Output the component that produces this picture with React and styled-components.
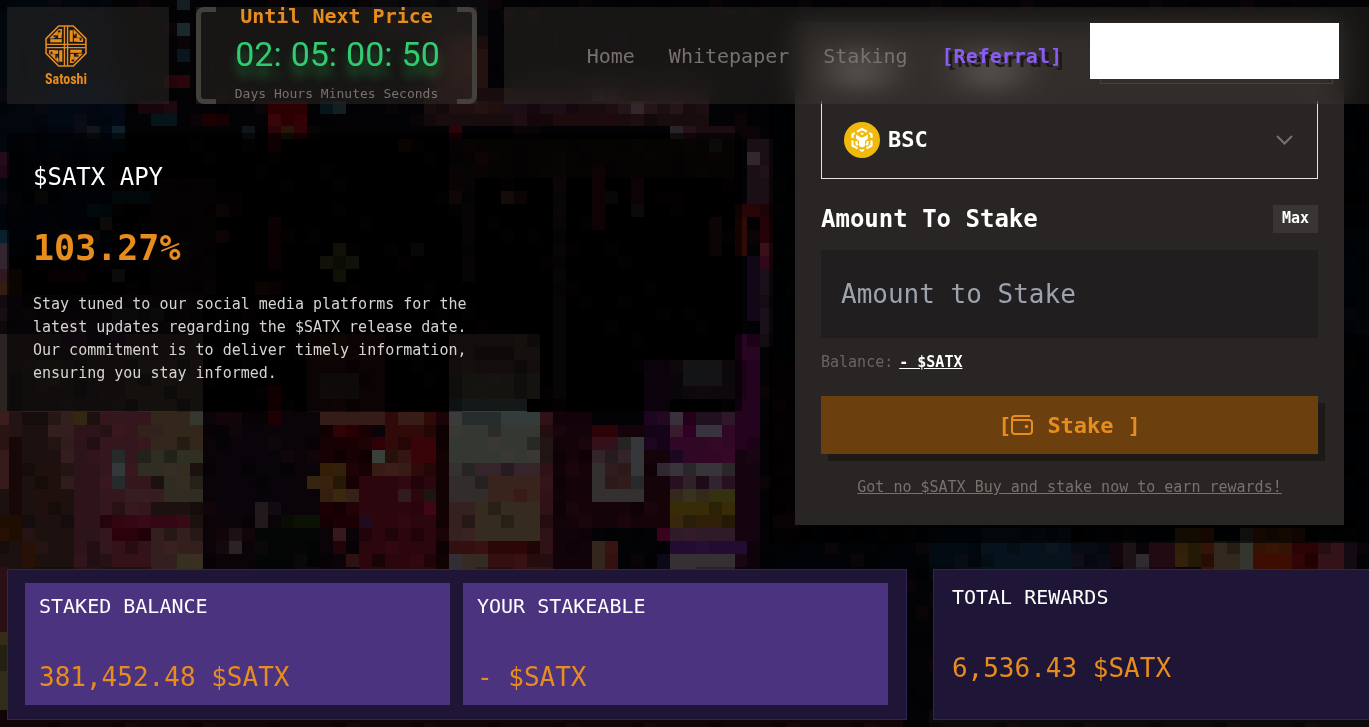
import React from 'react'
import styled, { createGlobalStyle, css } from 'styled-components'

const GlobalStyle = createGlobalStyle`
  * {
    box-sizing: border-box;
  }

  body {
    margin: 0;
    overflow: hidden;
    background: #030204;
    color: #fff;
    font-family: 'DejaVu Sans Mono', 'Liberation Mono', monospace;
  }

  h1, h2, p {
    margin: 0;
    font-weight: 400;
  }

  button, input, select {
    font-family: inherit;
    border: 0;
    border-radius: 0;
  }
`

/* ---------- Backdrop ---------- */

// [column, row, width, height, colour]
const PIXELS = [
  // sky on the left
  [0, 0, 9, 20, '#02060d'],
  [4, 6, 6, 6, '#020914'],
  [14, 0, 1, 1, '#1b282b'],
  [14, 2, 1, 1, '#1b282b'],
  [14, 4, 1, 1, '#07171c'],
  [13, 6, 2, 1, '#240309'],
  [12, 9, 2, 1, '#061519'],
  [9, 10, 1, 1, '#10202a'],
  [7, 10, 1, 1, '#0b1418'],
  [11, 8, 3, 1, '#18050b'],
  [16, 9, 1, 1, '#2a0003'],
  [17, 9, 1, 1, '#150004'],
  [21, 8, 3, 3, '#2c0003'],
  [21, 9, 1, 2, '#38060a'],
  [22, 10, 1, 1, '#331f0b'],
  [21, 11, 1, 1, '#260206'],
  [25, 8, 1, 1, '#04161b'],
  [26, 8, 1, 1, '#141f21'],
  [19, 10, 1, 1, '#111519'],
  [0, 12, 1, 1, '#240d1b'],
  [0, 13, 1, 1, '#22071a'],
  [0, 18, 1, 1, '#06202c'],
  [0, 19, 1, 2, '#332530'],
  [0, 21, 1, 2, '#301720'],
  [0, 22, 1, 1, '#331c10'],
  [0, 23, 1, 3, '#10020f'],
  [3, 15, 1, 1, '#1a1512'],
  [9, 15, 3, 1, '#02161a'],
  [7, 16, 2, 1, '#031820'],
  [8, 17, 1, 1, '#241a1a'],
  [5, 18, 3, 1, '#1a1010'],
  [16, 16, 2, 1, '#241009'],
  [16, 18, 2, 1, '#1c0b08'],
  [12, 14, 5, 9, '#0c0506'],
  [21, 17, 1, 4, '#1c0406'],
  [9, 21, 1, 1, '#20191c'],
  [1, 21, 1, 2, '#1d0e04'],
  [4, 21, 3, 1, '#14040a'],
  [20, 22, 2, 1, '#1c0a08'],
  [26, 19, 1, 3, '#2b2a10'],
  [25, 20, 3, 1, '#2b2817'],
  [32, 19, 1, 1, '#14100f'],
  // roofs
  [29, 0, 9, 3, '#0a090b'],
  [34, 3, 4, 4, '#241211'],
  [33, 7, 22, 3, '#190c0e'],
  [35, 8, 4, 1, '#200f0f'],
  [39, 8, 6, 1, '#1d0d14'],
  [41, 9, 7, 1, '#1c0a0c'],
  [46, 7, 2, 1, '#2c1c1f'],
  [48, 8, 5, 1, '#251418'],
  [49, 8, 1, 1, '#33262c'],
  [52, 10, 1, 1, '#29242a'],
  [53, 10, 4, 1, '#251117'],
  [35, 10, 1, 1, '#2d0208'],
  [35, 11, 22, 3, '#110a09'],
  [31, 11, 1, 1, '#240b0a'],
  [35, 13, 1, 3, '#20100d'],
  [37, 12, 1, 1, '#240b08'],
  [39, 15, 1, 1, '#331c19'],
  [40, 15, 1, 1, '#1c080a'],
  [43, 12, 1, 19, '#120f0d'],
  [36, 13, 1, 9, '#100c0b'],
  [46, 13, 1, 5, '#25060a'],
  [49, 14, 1, 2, '#25090a'],
  [49, 16, 1, 1, '#201a17'],
  [47, 15, 1, 1, '#111316'],
  [55, 11, 1, 1, '#1b1c1d'],
  [55, 17, 1, 3, '#1c0b0a'],
  [58, 11, 2, 5, '#1b0f16'],
  [58, 12, 1, 1, '#33262d'],
  [57, 16, 3, 1, '#250508'],
  [57, 17, 1, 3, '#300a07'],
  [59, 17, 1, 2, '#250209'],
  [59, 19, 1, 1, '#3a1018'],
  [59, 20, 1, 1, '#2c0618'],
  [60, 20, 1, 1, '#230c17'],
  [58, 20, 1, 5, '#120717'],
  [59, 21, 1, 6, '#19101a'],
  // left building
  [0, 26, 16, 6, '#2b2222'],
  [0, 23, 16, 3, '#110b0f'],
  [9, 24, 4, 1, '#1c191c'],
  [5, 25, 5, 2, '#201422'],
  [10, 28, 6, 4, '#302a22'],
  [3, 28, 2, 2, '#2b2921'],
  [0, 32, 16, 13, '#1d1110'],
  [0, 32, 1, 6, '#371b1a'],
  [1, 34, 1, 6, '#180707'],
  [4, 32, 2, 2, '#331f1e'],
  [5, 34, 1, 4, '#301c1d'],
  [6, 32, 1, 1, '#332711'],
  [6, 33, 3, 11, '#2d141a'],
  [8, 32, 4, 12, '#33171c'],
  [12, 32, 4, 3, '#33261b'],
  [11, 33, 2, 1, '#33221b'],
  [15, 32, 1, 1, '#35382f'],
  [11, 35, 3, 2, '#2f2e22'],
  [14, 35, 2, 1, '#2f3022'],
  [13, 37, 3, 2, '#302c22'],
  [14, 36, 1, 1, '#352b1e'],
  [9, 35, 1, 3, '#34383a'],
  [10, 38, 3, 1, '#361d20'],
  [8, 40, 2, 1, '#32060f'],
  [10, 40, 5, 1, '#330814'],
  [9, 41, 3, 1, '#2b020b'],
  [12, 41, 4, 4, '#33201e'],
  [9, 42, 3, 2, '#341219'],
  [14, 43, 2, 2, '#35301f'],
  [0, 40, 2, 2, '#200d02'],
  [3, 36, 2, 4, '#1f100e'],
  [2, 42, 1, 2, '#271005'],
  // alley
  [16, 32, 18, 13, '#0a0307'],
  [17, 33, 6, 7, '#080409'],
  [21, 30, 1, 3, '#290004'],
  [24, 26, 6, 6, '#20090a'],
  [25, 26, 2, 2, '#211305'],
  [25, 29, 3, 2, '#241b1a'],
  [25, 32, 5, 1, '#351c18'],
  [30, 32, 4, 5, '#300909'],
  [31, 32, 2, 1, '#381d16'],
  [25, 33, 4, 6, '#170102'],
  [26, 33, 2, 1, '#280003'],
  [29, 34, 1, 1, '#2f0006'],
  [29, 35, 1, 1, '#384039'],
  [29, 36, 3, 1, '#371c15'],
  [30, 35, 2, 1, '#351511'],
  [32, 34, 2, 2, '#380407'],
  [25, 36, 2, 2, '#33200a'],
  [24, 37, 1, 1, '#35240f'],
  [25, 36, 1, 1, '#331f05'],
  [25, 38, 1, 1, '#331f10'],
  [26, 38, 1, 1, '#3b270b'],
  [27, 38, 1, 1, '#35201a'],
  [20, 39, 1, 2, '#22191c'],
  [21, 39, 1, 1, '#150f16'],
  [22, 40, 3, 1, '#0b1104'],
  [20, 41, 5, 4, '#030605'],
  [18, 41, 1, 1, '#1c1015'],
  [18, 42, 1, 1, '#2b2226'],
  [17, 42, 1, 1, '#180c12'],
  [28, 37, 6, 8, '#2c060d'],
  [31, 38, 1, 1, '#311c1d'],
  [33, 38, 1, 1, '#1d150e'],
  [32, 39, 2, 1, '#380510'],
  [28, 40, 1, 1, '#1c081c'],
  [26, 41, 1, 1, '#36191c'],
  [26, 42, 1, 1, '#20040a'],
  [27, 43, 1, 1, '#2c1213'],
  [29, 43, 1, 1, '#190405'],
  [25, 39, 3, 2, '#1b0103'],
  [34, 32, 1, 13, '#130204'],
  // lit tower
  [35, 26, 7, 3, '#302522'],
  [35, 29, 7, 2, '#33302a'],
  [35, 31, 6, 1, '#343d3c'],
  [35, 32, 7, 1, '#343b3b'],
  [35, 33, 7, 3, '#353831'],
  [38, 33, 1, 1, '#2c2b28'],
  [37, 36, 5, 1, '#35252a'],
  [35, 36, 2, 1, '#343230'],
  [35, 37, 3, 2, '#332c2d'],
  [38, 37, 4, 3, '#38241c'],
  [40, 38, 1, 1, '#3a1a17'],
  [35, 39, 2, 3, '#352120'],
  [37, 39, 5, 3, '#352b1f'],
  [35, 42, 7, 3, '#33100f'],
  [38, 42, 4, 1, '#2b0708'],
  [35, 43, 1, 2, '#332d36'],
  [36, 43, 2, 2, '#352a24'],
  [42, 32, 1, 13, '#2f1216'],
  [42, 34, 1, 2, '#201414'],
  [43, 32, 3, 13, '#12030a'],
  [44, 33, 8, 8, '#15030a'],
  // signs
  [46, 33, 2, 1, '#2c0307'],
  [46, 34, 4, 5, '#33302f'],
  [46, 34, 2, 1, '#34101a'],
  [46, 35, 3, 1, '#33242a'],
  [47, 36, 2, 2, '#2c1a1a'],
  [49, 34, 1, 4, '#35373a'],
  [46, 42, 2, 3, '#35261d'],
  [47, 42, 1, 3, '#33110f'],
  [50, 28, 2, 7, '#1c061f'],
  [52, 32, 5, 4, '#300724'],
  [52, 32, 1, 1, '#34303a'],
  [52, 33, 1, 1, '#331a2c'],
  [53, 32, 1, 2, '#300024'],
  [54, 32, 3, 1, '#2d1729'],
  [54, 33, 2, 1, '#39333f'],
  [52, 35, 1, 1, '#1c0722'],
  [52, 28, 5, 3, '#211420'],
  [53, 28, 3, 2, '#2e3236'],
  [57, 26, 2, 9, '#24031f'],
  [57, 35, 2, 9, '#14040f'],
  [51, 36, 1, 1, '#302732'],
  [52, 36, 5, 1, '#393439'],
  [52, 37, 5, 1, '#271020'],
  [53, 37, 1, 1, '#302027'],
  [55, 37, 1, 1, '#302430'],
  [52, 38, 5, 1, '#33281a'],
  [53, 38, 1, 1, '#37331f'],
  [55, 38, 2, 1, '#33310f'],
  [52, 39, 5, 1, '#382c08'],
  [52, 40, 2, 1, '#38270d'],
  [54, 40, 3, 1, '#302009'],
  [52, 41, 5, 1, '#2f1a29'],
  [51, 41, 1, 1, '#33001a'],
  [52, 42, 6, 1, '#220c31'],
  [52, 43, 5, 2, '#343033'],
  [51, 43, 1, 2, '#0b0915'],
  // street under the card
  [60, 8, 46, 37, '#020306'],
  [60, 28, 2, 14, '#080306'],
  [60, 40, 2, 1, '#140c10'],
  [72, 41, 6, 4, '#020a12'],
  [76, 41, 7, 4, '#06131c'],
  [83, 42, 3, 3, '#080b15'],
  [86, 42, 1, 2, '#12060c'],
  [87, 42, 1, 3, '#1c1317'],
  [88, 43, 1, 2, '#302b30'],
  [89, 42, 2, 3, '#220a13'],
  [91, 41, 2, 3, '#302008'],
  [93, 41, 1, 4, '#351307'],
  [94, 42, 2, 3, '#32281d'],
  [96, 41, 1, 4, '#34352f'],
  [97, 41, 4, 2, '#331404'],
  [97, 43, 4, 2, '#3d0d02'],
  [100, 42, 2, 3, '#2b0303'],
  [102, 42, 2, 3, '#331318'],
  [104, 42, 1, 3, '#140a12'],
  [104, 18, 2, 8, '#020b13'],
  // sliver below the statistics
  [0, 44, 1, 5, '#2a1015'],
  [0, 49, 1, 6, '#302c18'],
  [0, 55, 70, 2, '#120407'],
  [72, 55, 34, 2, '#0c080b'],
]

const BackdropSvg = styled.svg`
  position: fixed;
  inset: 0;
  z-index: -1;
  width: 100%;
  height: 100%;
`

// Faint deterministic grain, so that large areas do not look flat
const GRAIN = []
for (let row = 0; row < 57; row++) {
  for (let col = 0; col < 106; col++) {
    const n = (col * 73 + row * 151 + col * row * 37) % 17
    if (n < 5) GRAIN.push([col, row, n])
  }
}

const Backdrop = () => (
  <BackdropSvg
    viewBox="0.32 0.24 105.7 56.1"
    preserveAspectRatio="xMinYMin slice"
    shapeRendering="crispEdges"
    aria-hidden="true"
  >
    {PIXELS.map(([x, y, w, h, fill], i) => (
      <rect key={i} x={x} y={y} width={w} height={h} fill={fill} />
    ))}
    {GRAIN.map(([x, y, n]) => (
      <rect
        key={`${x}-${y}`}
        x={x}
        y={y}
        width="1"
        height="1"
        fill={n < 3 ? '#000' : '#a04050'}
        opacity={n < 3 ? 0.25 : 0.05}
      />
    ))}
  </BackdropSvg>
)

/* ---------- Header ---------- */

const Header = styled.header`
  position: fixed;
  top: 7px;
  left: 7px;
  right: 0;
  z-index: 10;
  height: 97px;
  display: flex;
  gap: 27px;
`

const headerPanel = css`
  background: rgba(68, 64, 60, 0.32);
  backdrop-filter: blur(14px);
`

const LogoLink = styled.a`
  ${headerPanel}
  width: 162px;
  padding: 18px 0 0 38px;
  color: #e78c1e;
  text-decoration: none;
`

const LogoMark = styled.span`
  display: flex;
  flex-direction: column;
  align-items: center;
  width: 42px;
`

const LogoName = styled.span`
  font-family: 'Liberation Sans Narrow', 'Roboto Condensed', 'Roboto', sans-serif;
  font-size: 14px;
  font-weight: 700;
  line-height: 24px;
`

const Countdown = styled.section`
  ${headerPanel}
  position: relative;
  width: 281px;
  text-align: center;
`

const Bracket = styled.span`
  position: absolute;
  top: 0;
  bottom: 0;
  ${({ $side }) => $side}: 0;
  width: 20px;
  border: 5px solid #44403c;
  border-${({ $side }) => ($side === 'left' ? 'right' : 'left')}: 0;
  border-radius: ${({ $side }) => ($side === 'left' ? '8px 0 0 8px' : '0 8px 8px 0')};
`

const CountdownTitle = styled.h2`
  font-size: 20px;
  font-weight: 700;
  line-height: 18px;
  color: #e78c1e;
`

const Clock = styled.div`
  display: flex;
  justify-content: center;
  gap: 9px;
  padding-left: 2px;
  font-family: 'Roboto', sans-serif;
  font-size: 34px;
  line-height: 58px;
  color: #2fcc71;
  text-shadow: 0 10px 10px rgba(34, 160, 70, 0.6);
`

const Units = styled.p`
  font-size: 13px;
  line-height: 22px;
  color: #78716c;
`

const Nav = styled.nav`
  ${headerPanel}
  flex: 1;
  display: flex;
  align-items: center;
  justify-content: flex-end;
  gap: 34px;
  padding-right: 30px;
`

const NavLink = styled.a`
  font-size: 20px;
  line-height: 28px;
  color: ${({ $accent }) => ($accent ? '#8b5cf6' : '#78716c')};
  font-weight: ${({ $accent }) => ($accent ? 700 : 400)};
  text-shadow: ${({ $accent }) => ($accent ? '4px 4px 0 #1c1917' : 'none')};
  text-decoration: none;
`

const ConnectButton = styled.button`
  position: relative;
  width: 249px;
  height: 56px;
  margin: 0 0 9px -6px;
  background: #fff;

  &::after {
    content: '';
    position: absolute;
    top: 100%;
    left: 10px;
    right: 6px;
    height: 4px;
    border: 1px solid #44403c;
    border-top: 0;
  }
`

/* ---------- Staking ---------- */

const Main = styled.main`
  padding: 7px 0 0 7px;
  overflow: hidden;
`

const Top = styled.div`
  display: grid;
  grid-template-columns: 735fr 600fr;
  gap: 27px;
  align-items: start;
`

const Apy = styled.section`
  margin-top: 126px;
  padding: 26px;
  background: rgba(0, 0, 0, 0.6);
`

const ApyTitle = styled.h2`
  font-size: 24px;
  line-height: 36px;
`

const ApyValue = styled.p`
  margin: 25px 0 17px;
  font-size: 35px;
  font-weight: 700;
  line-height: 56px;
  color: #e78c1e;
`

const ApyText = styled.p`
  max-width: 460px;
  font-size: 15px;
  line-height: 23px;
  color: #d6d3d1;
`

const StakePanel = styled.section`
  padding: 15px 25px 18px 26px;
  background: rgba(0, 0, 0, 0.6);
`

const Card = styled.form`
  padding: 0 26px 27px;
  background: #292524;
`

const CardTop = styled.div`
  height: 79px;
  background:
    radial-gradient(ellipse 54px 20px at 38px 48px, #8a8784, transparent),
    radial-gradient(ellipse 54px 20px at 170px 48px, #8a8784, transparent);
`

const NetworkField = styled.label`
  display: flex;
  align-items: center;
  height: 78px;
  padding: 0 24px 0 22px;
  border: 1px solid #e7e5e4;
  border-top: 0;
`

const NetworkSelect = styled.select`
  flex: 1;
  appearance: none;
  padding: 0 8px;
  background: transparent;
  color: #fff;
  font-size: 22px;
  font-weight: 700;
  line-height: 36px;
`

const AmountHead = styled.div`
  display: flex;
  justify-content: space-between;
  align-items: center;
  margin: 26px 0 17px;
`

const AmountLabel = styled.label`
  font-size: 24px;
  font-weight: 700;
  line-height: 28px;
`

const MaxButton = styled.button`
  height: 28px;
  padding: 0 9px 2px;
  background: #393532;
  color: #fff;
  font-size: 15px;
  font-weight: 700;
`

const AmountInput = styled.input`
  display: block;
  width: 100%;
  height: 88px;
  padding: 0 20px;
  background: #211e1f;
  color: #fff;
  font-size: 26px;

  &::placeholder {
    color: #9ca3af;
    opacity: 1;
  }
`

const Balance = styled.p`
  display: flex;
  gap: 6px;
  margin: 13px 0 22px;
  font-size: 15px;
  line-height: 23px;
  color: #6b6560;
`

const BalanceLink = styled.a`
  color: #fff;
  font-weight: 700;
`

const StakeButton = styled.button`
  display: flex;
  align-items: center;
  justify-content: center;
  width: 100%;
  height: 58px;
  background: #6c400e;
  box-shadow: 7px 7px 0 #1c1917;
  color: #e78c1e;
  font-size: 22px;
  font-weight: 700;
`

const StakeWord = styled.span`
  margin: 0 14px;
`

const BuyLink = styled.a`
  display: block;
  margin-top: 22px;
  text-align: center;
  font-size: 15px;
  line-height: 22px;
  color: #78716c;
`

/* ---------- Statistics ---------- */

const Stats = styled.div`
  display: grid;
  grid-template-columns: repeat(2, calc(66% + 1px));
  gap: 26px;
  margin-top: 26px;
`

const StatGroup = styled.section`
  display: grid;
  grid-template-columns: ${({ $columns }) => `repeat(${$columns}, 1fr)`};
  gap: 13px;
  height: 151px;
  padding: ${({ $columns }) => ($columns > 1 ? '13px 18px 14px 17px' : '4px')};
  background: #1f1536;
  border: 1px solid #2e2650;
`

const Stat = styled.div`
  padding: 10px 14px;
  background: ${({ $filled }) => ($filled ? '#4b3380' : 'transparent')};
`

const StatTitle = styled.h2`
  font-size: 20px;
  line-height: 26px;
`

const StatValue = styled.p`
  margin-top: 40px;
  font-size: 26px;
  line-height: 36px;
  color: #e78c1e;
`

/* ---------- Icons ---------- */

const KnotIcon = () => (
  <svg width="42" height="42" viewBox="0 0 40 40" fill="none" stroke="#e78c1e" aria-hidden="true">
    <path d="M13 1H27L39 13V27L27 39H13L1 27V13Z" strokeWidth="1.5" />
    {[0, 90, 180, 270].map((angle) => (
      <g key={angle} transform={`rotate(${angle} 20 20)`}>
        <path d="M18.500 1V39" strokeWidth="1.3" />
        <path d="M12.500 4.500H15.500V9" strokeWidth="1.5" />
        <path d="M4.500 12.500L12 5V10L8 12.500Z" fill="#e78c1e" strokeWidth="0.6" />
        <path d="M5 15H16" strokeWidth="3" />
        <path d="M14.200 7V12.500" strokeWidth="3.400" />
        <path d="M8 10.500H12" strokeWidth="1.4" stroke="#15171a" />
      </g>
    ))}
  </svg>
)

const BscIcon = () => (
  <svg width="36" height="36" viewBox="0 0 36 36" aria-hidden="true">
    <circle cx="18" cy="18" r="18" fill="#f0b90b" />
    <g fill="none" stroke="#fff" strokeWidth="2.2">
      <path d="M13 9.800L18 7L23 9.800" />
      <path d="M8.500 16V12.300L10.800 11M27.500 16V12.300L25.200 11" />
      <path d="M8.500 18.500V23.500L13.500 26.400M27.500 18.500V23.500L22.500 26.400" />
      <path d="M12.500 19V22L14 23M23.500 19V22L22 23" />
    </g>
    <path fill="#fff" d="M12 12.500L15 14.300L18 15.700L21 14.300L24 12.500V16.500L21 19V24L18 25.500L15 24V19L12 16.500Z" />
    <path fill="#fff" d="M18 10.500L20 11.700L18 12.900L16 11.700ZM15.800 26.800L18 28L20.200 26.800V28.600L18 30L15.800 28.600Z" />
  </svg>
)

const ChevronIcon = () => (
  <svg width="17" height="10" viewBox="0 0 17 10" fill="none" stroke="#78716c" strokeWidth="2" aria-hidden="true">
    <path d="M1 1L8.500 8.500L16 1" />
  </svg>
)

const WalletIcon = () => (
  <svg width="22" height="22" viewBox="0 0 22 22" fill="none" stroke="#e78c1e" strokeWidth="2" aria-hidden="true">
    <path d="M19 2H4Q1 2 1 5V17Q1 20 4 20H18Q21 20 21 17V9Q21 6 18 6H1" />
    <circle cx="15.500" cy="12.500" r="1.800" fill="#e78c1e" stroke="none" />
  </svg>
)

/* ---------- Page ---------- */

const App = () => {
  return (
    <>
      <GlobalStyle />
      <Backdrop />

      <Header>
        <LogoLink href="#home">
          <LogoMark>
            <KnotIcon />
            <LogoName>Satoshi</LogoName>
          </LogoMark>
        </LogoLink>

        <Countdown>
          <Bracket $side="left" />
          <Bracket $side="right" />
          <CountdownTitle>Until Next Price</CountdownTitle>
          <Clock>
            <span>02:</span>
            <span>05:</span>
            <span>00:</span>
            <span>50</span>
          </Clock>
          <Units>Days Hours Minutes Seconds</Units>
        </Countdown>

        <Nav>
          <NavLink href="#home">Home</NavLink>
          <NavLink href="#whitepaper">Whitepaper</NavLink>
          <NavLink href="#staking">Staking</NavLink>
          <NavLink href="#referral" $accent>[Referral]</NavLink>
          <ConnectButton type="button" aria-label="Connect wallet" />
        </Nav>
      </Header>

      <Main>
        <Top>
          <Apy>
            <ApyTitle>$SATX APY</ApyTitle>
            <ApyValue>103.27%</ApyValue>
            <ApyText>
              Stay tuned to our social media platforms for the latest updates
              regarding the $SATX release date. Our commitment is to deliver
              timely information, ensuring you stay informed.
            </ApyText>
          </Apy>

          <StakePanel>
            <Card>
              <CardTop />
              <NetworkField>
                <BscIcon />
                <NetworkSelect aria-label="Network">
                  <option>BSC</option>
                </NetworkSelect>
                <ChevronIcon />
              </NetworkField>

              <AmountHead>
                <AmountLabel htmlFor="amount">Amount To Stake</AmountLabel>
                <MaxButton type="button">Max</MaxButton>
              </AmountHead>
              <AmountInput id="amount" placeholder="Amount to Stake" />

              <Balance>
                Balance:
                <BalanceLink href="#balance">- $SATX</BalanceLink>
              </Balance>

              <StakeButton type="button">
                <span>[</span>
                <WalletIcon />
                <StakeWord>Stake</StakeWord>
                <span>]</span>
              </StakeButton>
              <BuyLink href="#buy">Got no $SATX Buy and stake now to earn rewards!</BuyLink>
            </Card>
          </StakePanel>
        </Top>

        {/* The second group runs past the right edge of the window */}
        <Stats>
          <StatGroup $columns={2}>
            <Stat $filled>
              <StatTitle>STAKED BALANCE</StatTitle>
              <StatValue>381,452.48 $SATX</StatValue>
            </Stat>
            <Stat $filled>
              <StatTitle>YOUR STAKEABLE</StatTitle>
              <StatValue>- $SATX</StatValue>
            </Stat>
          </StatGroup>
          <StatGroup $columns={1}>
            <Stat>
              <StatTitle>TOTAL REWARDS</StatTitle>
              <StatValue>6,536.43 $SATX</StatValue>
            </Stat>
          </StatGroup>
        </Stats>
      </Main>
    </>
  )
}

export default App
